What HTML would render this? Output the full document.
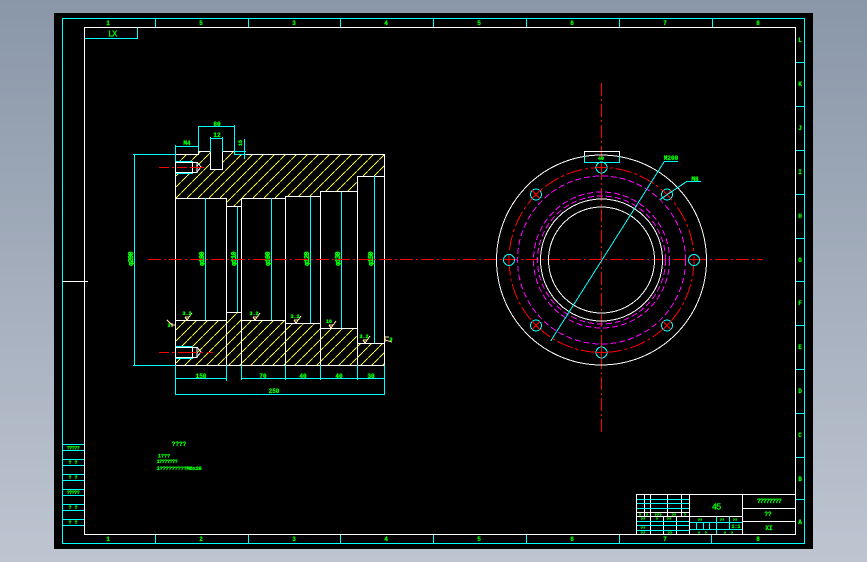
<!DOCTYPE html>
<html><head><meta charset="utf-8"><style>
html,body{margin:0;padding:0;width:867px;height:562px;overflow:hidden;background:linear-gradient(#8a97a8,#bec5d1)}
svg{position:absolute;left:0;top:0;display:block}
text{font-family:"Liberation Mono",monospace;fill:#0f0;stroke:#0f0;stroke-width:.25px;font-weight:bold;font-size:5px;text-anchor:middle}
.t{font-size:6px}
.v{font-size:7px;letter-spacing:-.8px;stroke-width:.4px}
.w{stroke:#fff;fill:none}
.c{stroke:#0ff;fill:none}
</style></head><body>
<svg width="867" height="562" viewBox="0 0 867 562" shape-rendering="crispEdges">
<defs>
<pattern id="h" width="11" height="11" patternUnits="userSpaceOnUse">
<path d="M-1 12L12 -1" stroke="#f0f040" stroke-width="1" stroke-dasharray="8 1" fill="none"/>
</pattern>
</defs>
<rect x="54" y="13" width="759" height="536" fill="#000"/>

<!-- frames -->
<path class="c" d="M62.5 18.5H804.5V543.5H62.5Z"/>
<path class="w" d="M84.5 27.5H795.5V534.5H84.5Z"/>
<path class="c" d="M155.5 18.5V27M248.5 18.5V27M340.5 18.5V27M433.5 18.5V27M526.5 18.5V27M619.5 18.5V27M712.5 18.5V27"/>
<path class="c" d="M155.5 535V543M248.5 535V543M340.5 535V543M433.5 535V543M526.5 535V543M619.5 535V543M711.5 535V543"/>
<path class="c" d="M796 62.5H804M796 106.5H804M796 150.5H804M796 194.5H804M796 238.5H804M796 281.5H804M796 325.5H804M796 369.5H804M796 413.5H804M796 457.5H804M796 499.5H804"/>
<path class="w" d="M62.5 281.5H88"/>
<path class="c" d="M137.5 27.5V38.5H85"/>
<text x="112" y="36.500" style="font-size:9px;font-weight:normal;letter-spacing:-1.500px">LX</text>

<g>
<text class="t" x="108" y="25">1</text><text class="t" x="201" y="25">5</text><text class="t" x="294" y="25">3</text><text class="t" x="386" y="25">4</text><text class="t" x="479" y="25">5</text><text class="t" x="572" y="25">6</text><text class="t" x="665" y="25">7</text><text class="t" x="758" y="25">8</text>
<text class="t" x="108" y="541">1</text><text class="t" x="201" y="541">2</text><text class="t" x="294" y="541">3</text><text class="t" x="386" y="541">4</text><text class="t" x="479" y="541">5</text><text class="t" x="572" y="541">6</text><text class="t" x="665" y="541">7</text><text class="t" x="758" y="541">8</text>
<text class="t" x="800" y="42">L</text><text class="t" x="800" y="86">K</text><text class="t" x="800" y="130">J</text><text class="t" x="800" y="174">I</text><text class="t" x="800" y="218">H</text><text class="t" x="800" y="262">G</text><text class="t" x="800" y="305">F</text><text class="t" x="800" y="349">E</text><text class="t" x="800" y="393">D</text><text class="t" x="800" y="437">C</text><text class="t" x="800" y="481">B</text><text class="t" x="800" y="524">A</text>
</g>

<!-- left table -->
<path class="c" d="M62 444.5H84M62 450.5H84M62 459.5H84M62 465.5H84M62 474.5H84M62 480.5H84M62 489.5H84M62 495.5H84M62 504.5H84M62 510.5H84M62 519.5H84M62 525.5H84"/>
<text x="73" y="449.500" style="letter-spacing:-.5px">?????</text>
<text x="73" y="464">? ?</text><text x="73" y="479">? ?</text><text x="73" y="494" style="letter-spacing:-.5px">?????</text><text x="73" y="509">? ?</text><text x="73" y="524">? ?</text>

<!-- notes -->
<text x="179" y="446" style="font-size:6px">????</text>
<text x="164" y="457.500">1???</text>
<text x="167" y="463" style="letter-spacing:-.4px">1???????</text>
<text x="179" y="470" style="font-size:5.500px;letter-spacing:-.3px">1?????????M8x20</text>

<!-- hatching -->
<path fill="url(#h)" fill-rule="evenodd" d="M175 154H198V152H210V169H223V152H234V154H384V176H357V192H320V197H285V198H241V207H226V198H175ZM175 161H197V173H175Z"/>
<path fill="url(#h)" fill-rule="evenodd" d="M175 320H226V312H241V320H285V323H320V328H357V343H384V365H175ZM175 347H197V358H175Z"/>

<!-- section profile -->
<path class="w" d="M175.500 198.500V154.500H198.500V151.500H210.500V169.500H222.500V151.500H234.500V154.500H384.500V365.500H175.500V320.500"/>
<path class="w" d="M175.500 198.500H226.500V206.500H241.500V198.500H285.500V196.500H320.500V191.500H357.500V176.500H384.500"/>
<path class="w" d="M175.500 320.500H226.500V312.500H241.500V320.500H285.500V323.500H320.500V328.500H357.500V343.500H384.500"/>
<path class="w" d="M175.500 198.500V320.500M226.500 198.500V365.500M241.500 198.500V365.500M285.500 196.500V365.500M320.500 191.500V365.500M357.500 176.500V365.500"/>
<path class="w" d="M175.500 162.500H197V172.500H175.500M192.500 162.500V172.500"/>
<path class="w" d="M175.500 347.500H197V357.500H175.500M192.500 347.500V357.500"/>
<path d="M197 162L201 167L197 172M197 347L201 352L197 357" stroke="#fff" fill="none"/>
<path d="M159 167.500H169M172 167.500H174M177 167.500H187M190 167.500H204" stroke="#f00" fill="none"/>
<path d="M159 352.500H169M172 352.500H175M178 352.500H197M200 352.500H203M207 352.500H213" stroke="#f00" fill="none"/>

<!-- dimensions -->
<path class="c" d="M134.500 154V365M133 154.500H175M133 365.500H175"/>
<path class="c" d="M175.500 145V161M175.500 146.500H198M198.500 126V151M198 126.500H234M234.500 125V154M210.500 137V152M222.500 137V152M210 138.500H223"/>
<path class="c" d="M244.500 139V159M234 151.500H246M234 154.500H246"/>
<path class="c" d="M175.500 161.500H193M175.500 173.500H193M175.500 346.500H193M175.500 358.500H193"/>
<path class="c" d="M205.500 198V320M237.500 207V312M271.500 198V320M310.500 197V323M341.500 192V328M374.500 176V343"/>
<path class="c" d="M175.500 365V395M226.500 365V381M241.500 365V380M285.500 365V380M320.500 365V380M357.500 365V380M384.500 365V395"/>
<path class="c" d="M175 378.500H227M241 378.500H385M175 394.500H385"/>

<text x="187" y="145" style="font-size:6px">M4</text><text x="217" y="126" style="font-size:6px">80</text><text x="217" y="137" style="font-size:6px">12</text>
<text transform="translate(242 143) rotate(-90)">15</text>
<text x="201" y="378" style="font-size:6px">150</text><text x="263" y="378" style="font-size:6px">70</text><text x="303" y="378" style="font-size:6px">40</text><text x="339" y="378" style="font-size:6px">40</text><text x="371" y="378" style="font-size:6px">30</text>
<text x="274" y="393" style="font-size:6px">250</text>
<g>
<text transform="translate(133 259) rotate(-90)" class="v">φ200</text>
<text transform="translate(204 259) rotate(-90)" class="v">φ100</text>
<text transform="translate(236 259) rotate(-90)" class="v">φ110</text>
<text transform="translate(270 259) rotate(-90)" class="v">φ100</text>
<text transform="translate(309 259) rotate(-90)" class="v">φ120</text>
<text transform="translate(340 259) rotate(-90)" class="v">φ130</text>
<text transform="translate(373 259) rotate(-90)" class="v">φ150</text>
</g>

<!-- roughness -->
<path stroke="#ffe8a8" fill="none" d="M185 317H189M185 317L187 320L192 313M253 317H257M253 317L255 320L260 313M294 320H298M294 320L296 323L301 316M329 325H333M329 325L331 328L336 321M363 340H367M363 340L365 343L370 336M172 323V327M172 325L167 320M172 325H176M385 337H389M385 337V342M385 340L392 342"/>
<text x="187" y="315">3.2</text><text x="254" y="315">3.2</text><text x="295" y="318">3.2</text><text x="329" y="323">16</text><text x="364" y="338">3.2</text><text x="169" y="327">3</text><text x="391" y="341">3</text>

<!-- right view -->
<g fill="none" stroke-width="1">
<path d="M148 259.500H763" stroke="#f00" stroke-dasharray="13 3 2 3"/>
<path d="M601.500 83V432" stroke="#f00" stroke-dasharray="13 3 2 3"/>
<circle cx="601.500" cy="260" r="105" stroke="#fff"/>
<circle cx="601.500" cy="260" r="61" stroke="#fff"/>
<circle cx="601.500" cy="260" r="53" stroke="#fff"/>
<circle cx="601.500" cy="260" r="64" stroke="#f0f" stroke-dasharray="6 3"/>
<circle cx="601.500" cy="260" r="68" stroke="#f0f" stroke-dasharray="6 3"/>
<circle cx="601.500" cy="260" r="84" stroke="#f0f" stroke-dasharray="6 3"/>
<circle cx="601.500" cy="260" r="92.500" stroke="#f00" stroke-dasharray="16 3 3 3"/>
<g>
<circle cx="601.500" cy="167.500" r="5.500" fill="#000" stroke="#0ff"/>
<circle cx="601.500" cy="352.500" r="5.500" fill="#000" stroke="#0ff"/>
<circle cx="509" cy="260" r="5.500" fill="#000" stroke="#0ff"/>
<circle cx="694" cy="260" r="5.500" fill="#000" stroke="#0ff"/>
<circle cx="536" cy="194.500" r="5.500" fill="#000" stroke="#0ff"/>
<circle cx="667" cy="194.500" r="5.500" fill="#000" stroke="#0ff"/>
<circle cx="536" cy="325.500" r="5.500" fill="#000" stroke="#0ff"/>
<circle cx="667" cy="325.500" r="5.500" fill="#000" stroke="#0ff"/>
</g>
<path stroke="#f00" d="M596 167.500H607M601.500 162V173M601.500 347V358M596 352.500H607M504 259.500H514M689 259.500H699M509 255V265M694 255V265M532 190.500L540 198.500M540 190.500L532 198.500M663 190.500L671 198.500M671 190.500L663 198.500M532 321.500L540 329.500M540 321.500L532 329.500M663 321.500L671 329.500M671 321.500L663 329.500"/>
<path stroke="#fff" d="M584.500 162V151.500H619.500V162"/>
<path stroke="#0ff" d="M584.500 156V162.500H619.500V156"/>
<path stroke="#0ff" d="M550.700 341L664.300 161.500H678M660 199.500L686.700 181.500H701"/>
</g>
<text x="601" y="160">40</text>
<text x="671" y="160" style="font-size:6px">M200</text>
<text x="695" y="181" style="font-size:6px">M8</text>

<!-- title block -->
<path class="w" d="M636.500 534.500V494.500H795.500V534.500M689.500 494.500V534.500M742.500 494.500V534.500M742.500 508.500H795.500M742.500 521.500H795.500"/>
<path class="w" d="M636.500 512.500H689.500M636.500 516.500H742.500"/>
<path class="w" d="M644.500 494.500V516.500M650.500 494.500V534.500M667.500 494.500V516.500M681.500 494.500V516.500M663.500 516.500V534.500M676.500 516.500V534.500"/>
<path class="c" d="M637 499.500H689M637 503.500H689M637 508.500H689M637 521.500H689M637 525.500H689M637 530.500H689"/>
<path class="c" d="M716.500 516.500V534M729.500 516.500V529.500M690 522.500H742M690 529.500H742M696.500 522.500V529.500M703.500 522.500V529.500M709.500 522.500V529.500"/>
<text x="716" y="509.500" style="font-size:9px;font-weight:normal;letter-spacing:-1px">45</text>
<text x="769" y="503" style="font-size:6px;letter-spacing:-.6px">????????</text>
<text x="768" y="516" style="font-size:6px">??</text>
<text x="769" y="530" style="font-size:6px">XI</text>
<text x="640" y="516" style="font-size:4px">?</text><text x="647" y="516" style="font-size:4px">?</text><text x="658" y="516" style="font-size:4px">???</text><text x="674" y="516" style="font-size:4px">??</text><text x="685" y="516" style="font-size:4px">?</text>
<text x="643" y="520" style="font-size:4px">??</text><text x="657" y="520" style="font-size:4px">?</text><text x="669" y="520" style="font-size:4px">??</text>
<text x="643" y="529" style="font-size:4px">??</text><text x="643" y="534" style="font-size:4px">??</text><text x="670" y="534" style="font-size:4px">??</text>
<text x="700" y="521" style="font-size:4px">??</text><text x="722" y="521" style="font-size:4px">??</text><text x="735" y="521" style="font-size:4px">??</text>
<text x="736" y="528" style="font-size:5px">1:1</text><text x="699" y="534" style="font-size:4px">?</text><text x="706" y="534" style="font-size:4px">?</text><text x="725" y="534" style="font-size:4px">?</text><text x="732" y="534" style="font-size:4px">?</text>
</svg>
</body></html>
